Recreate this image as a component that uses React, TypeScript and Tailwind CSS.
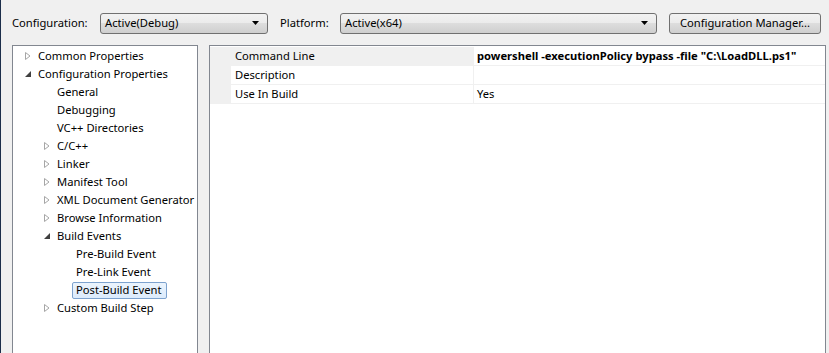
import React from "react";

const font = { fontFamily: '"Noto Sans", "Open Sans", sans-serif' };

function Collapsed() {
  return (
    <svg width="6" height="8" viewBox="0 0 6 8" className="block">
      <path d="M0.5 0.5 L5 4 L0.5 7.5 Z" fill="white" stroke="#a6a6a6" strokeWidth="1" />
    </svg>
  );
}
function Expanded() {
  return (
    <svg width="6" height="6" viewBox="0 0 6 6" className="block">
      <path d="M6 0 L6 6 L0 6 Z" fill="#404040" />
    </svg>
  );
}

type Node = { label: string; level: number; exp?: "c" | "e"; selected?: boolean };

const tree: Node[] = [
  { label: "Common Properties", level: 0, exp: "c" },
  { label: "Configuration Properties", level: 0, exp: "e" },
  { label: "General", level: 1 },
  { label: "Debugging", level: 1 },
  { label: "VC++ Directories", level: 1 },
  { label: "C/C++", level: 1, exp: "c" },
  { label: "Linker", level: 1, exp: "c" },
  { label: "Manifest Tool", level: 1, exp: "c" },
  { label: "XML Document Generator", level: 1, exp: "c" },
  { label: "Browse Information", level: 1, exp: "c" },
  { label: "Build Events", level: 1, exp: "e" },
  { label: "Pre-Build Event", level: 2 },
  { label: "Pre-Link Event", level: 2 },
  { label: "Post-Build Event", level: 2, selected: true },
  { label: "Custom Build Step", level: 1, exp: "c" },
];

const indent = ["pl-[12px]", "pl-[31px]", "pl-[50px]"];

const btnBg =
  "bg-[linear-gradient(#f2f2f2_0%,#ebebeb_50%,#dddddd_50%,#cfcfcf_100%)]";

function Combo({ w, text }: { w: string; text: string }) {
  return (
    <div
      className={`${w} h-[21px] shrink-0 flex items-center rounded-[3px] border border-[#707070] ${btnBg} pl-[4px] pr-[8px]`}
    >
      <span className="flex-1 text-black">{text}</span>
      <svg width="7" height="4" viewBox="0 0 7 4">
        <path d="M0 0 L7 0 L3.5 4 Z" fill="#000" />
      </svg>
    </div>
  );
}

export default function App() {
  return (
    <div
      style={font}
      className="w-[829px] h-[353px] overflow-hidden bg-[#f0f0f0] border-l border-[#1c2e4a] text-[11.2px] text-black flex flex-col"
    >
      <div className="h-[45px] shrink-0 flex items-center pl-[11px] pt-[1px]">
        <span className="w-[88px] shrink-0">Configuration:</span>
        <Combo w="w-[168px]" text="Active(Debug)" />
        <span className="ml-[12px] w-[60px] shrink-0">Platform:</span>
        <Combo w="w-[317px]" text="Active(x64)" />
        <div
          className={`ml-[12px] w-[152px] h-[21px] shrink-0 flex items-center justify-center rounded-[3px] border border-[#707070] ${btnBg}`}
        >
          Configuration Manager...
        </div>
      </div>
      <div className="flex pl-[11px]">
        <div className="w-[186px] h-[320px] shrink-0 border border-[#828790] bg-white pt-[1px]">
          {tree.map((n) => (
            <div key={n.label} className={`h-[18px] flex items-center ${indent[n.level]}`}>
              <span className="w-[13px] shrink-0 flex items-center">
                {n.exp === "c" ? <Collapsed /> : n.exp === "e" ? <Expanded /> : null}
              </span>
              {n.selected ? (
                <span className="ml-[-4px] h-[17px] pl-[3px] pr-[5px] flex items-center rounded-[2px] border border-[#7da2ce] bg-[linear-gradient(#ebf4fd,#dcebfc)] whitespace-nowrap">
                  {n.label}
                </span>
              ) : (
                <span className="whitespace-nowrap">{n.label}</span>
              )}
            </div>
          ))}
        </div>
        <div className="ml-[11px] w-[617px] h-[320px] shrink-0 border border-[#828790] bg-white pt-[1px]">
          {[
            { name: "Command Line", value: 'powershell -executionPolicy bypass -file "C:\\LoadDLL.ps1"', bold: true, sel: true },
            { name: "Description", value: "" },
            { name: "Use In Build", value: "Yes" },
          ].map((r) => (
            <div key={r.name} className="flex h-[19px]">
              <div className="w-[21px] bg-[#f0f0f0]" />
              <div
                className={`w-[243px] border-b border-r border-[#f0f0f0] pl-[4px] flex items-center ${r.sel ? "bg-[#f0f0f0]" : ""}`}
              >
                {r.name}
              </div>
              <div
                className={`flex-1 border-b border-[#f0f0f0] pl-[3px] flex items-center whitespace-nowrap ${r.bold ? "font-bold" : ""}`}
              >
                {r.value}
              </div>
            </div>
          ))}
        </div>
      </div>
    </div>
  );
}
